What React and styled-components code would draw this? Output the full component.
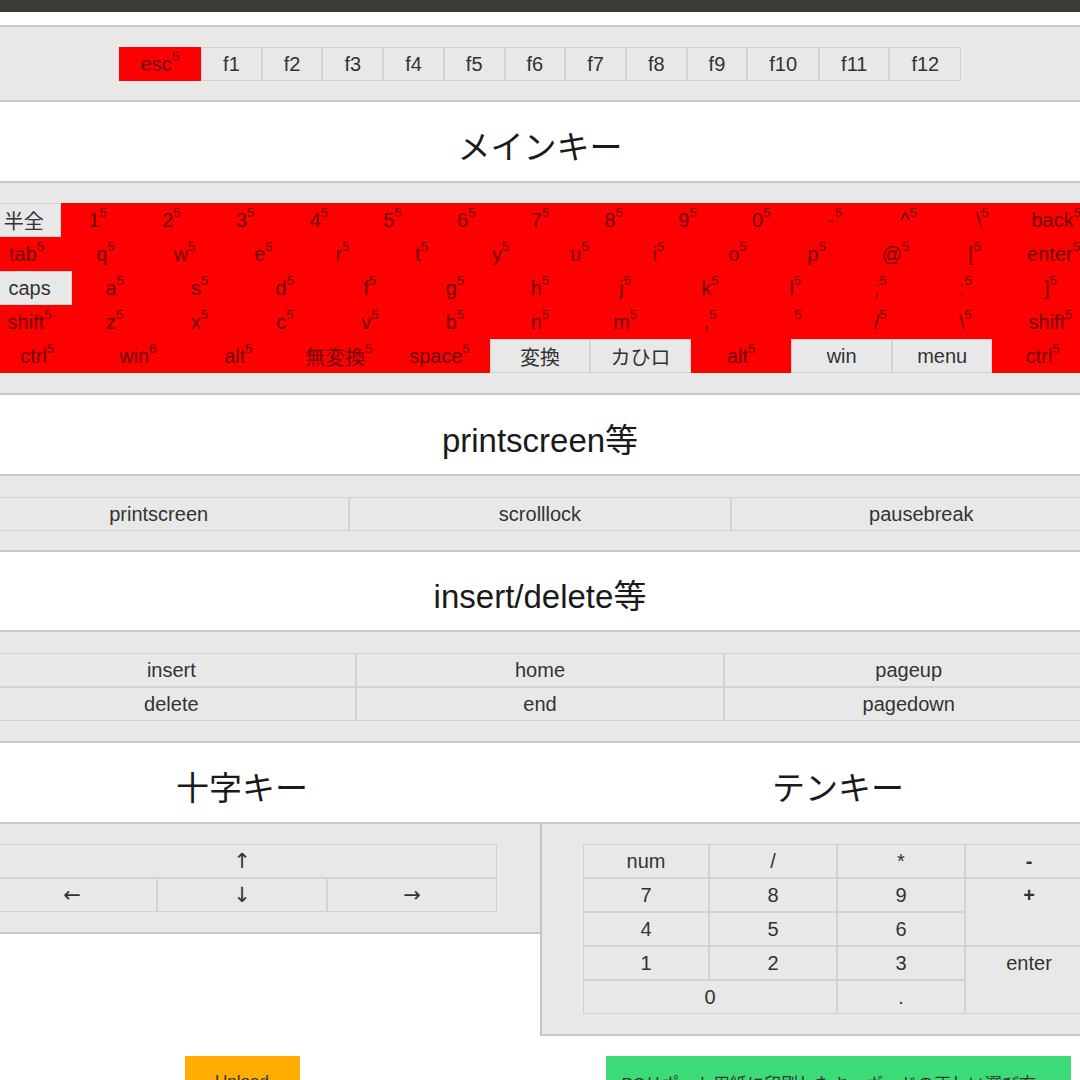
import React from 'react';
import styled, { createGlobalStyle } from 'styled-components';

const GlobalStyle = createGlobalStyle`
  body {
    margin: 0;
    overflow: hidden;
    background: #fff;
    font-family: "Liberation Sans", Arial, "Noto Sans CJK JP", sans-serif;
    color: #222;
  }
`

const TopBar = styled.div`
  height: 12px;
  background: #3a3d37;
  margin-bottom: 13px;
`

const Page = styled.div`
  width: 1106px;
  margin-left: -13px;
`

const Title = styled.h2`
  box-sizing: border-box;
  margin: 0;
  height: ${props => props.h || 79}px;
  padding-top: 6px;
  display: flex;
  align-items: center;
  justify-content: center;
  font-size: 33px;
  font-weight: normal;
  color: #1a1a1a;
  width: ${props => props.w ? `${props.w}px` : 'auto'};
  margin-left: ${props => props.offset || 0}px;
`

const Panel = styled.div`
  background: #e8e8e8;
  border-top: 2px solid #c9c9c9;
  border-bottom: 2px solid #c9c9c9;
  padding: ${props => props.pad || '20px 0'};
`

const FRow = styled.div`
  display: flex;
  justify-content: center;
`

const Row = styled.div`
  display: flex;
  margin: ${props => props.wide ? '0 -19px' : '0'};
`

const Key = styled.div`
  box-sizing: border-box;
  height: 34px;
  display: flex;
  align-items: center;
  justify-content: center;
  font-size: ${props => props.arrow ? 21 : 20}px;
  white-space: nowrap;
  flex: ${props => props.fixed ? '0 0 auto' : '1 1 0'};
  padding: ${props => props.fixed ? '0 21px' : '0'};
  background: ${props => props.red ? '#ff0000' : '#e8e8e8'};
  color: ${props => props.red ? '#6e0000' : '#333'};
  border: 1px solid ${props => props.red ? '#ff0000' : '#d2d2d2'};
  font-family: ${props => props.arrow ? '"DejaVu Sans", sans-serif' : 'inherit'};
`

const Sup = styled.span`
  font-size: 13px;
  line-height: 0;
  position: relative;
  top: -7px;
`

const Split = styled.div`
  display: grid;
  grid-template-columns: 553px 553px;
  align-items: start;
`

const Arrows = styled.div`
  width: 510px;
`

const SidePanel = styled(Panel)`
  border-left: ${props => props.right ? '2px solid #c4c4c4' : 'none'};
  padding: ${props => props.right ? '20px 0 20px 41px' : '20px 43px 20px 0'};
`

const NumGrid = styled.div`
  width: 510px;
  display: grid;
  grid-template-columns: 126px 128px 128px 128px;
  grid-auto-rows: 34px;
`

const NumKey = styled.div`
  box-sizing: border-box;
  border: 1px solid #d2d2d2;
  background: #e8e8e8;
  color: #333;
  font-size: 20px;
  line-height: 32px;
  text-align: center;
  grid-row: ${props => props.rows ? `span ${props.rows}` : 'auto'};
  grid-column: ${props => props.cols ? `span ${props.cols}` : 'auto'};
  font-weight: ${props => props.bold ? 'bold' : 'normal'};
`

const ButtonCell = styled.div`
  width: 510px;
  margin-left: ${props => props.offset || 0}px;
  display: flex;
  justify-content: center;
  padding-top: 20px;
`

const Button = styled.button`
  border: none;
  height: 52px;
  width: ${props => props.w}px;
  background: ${props => props.bg};
  color: #333;
  font-family: inherit;
  font-size: 17px;
  white-space: nowrap;
  overflow: hidden;
  text-align: ${props => props.left ? 'left' : 'center'};
  padding: 0 16px;
  cursor: pointer;
`

const fKeys = ['f1', 'f2', 'f3', 'f4', 'f5', 'f6', 'f7', 'f8', 'f9', 'f10', 'f11', 'f12'];

const g = (l) => ({ l, gray: true });

const mainRows = [
  [g('半全'), '1', '2', '3', '4', '5', '6', '7', '8', '9', '0', '-', '^', '\\', 'back'],
  ['tab', 'q', 'w', 'e', 'r', 't', 'y', 'u', 'i', 'o', 'p', '@', '[', 'enter'],
  [g('caps'), 'a', 's', 'd', 'f', 'g', 'h', 'j', 'k', 'l', ';', ':', ']'],
  ['shift', 'z', 'x', 'c', 'v', 'b', 'n', 'm', ',', '.', '/', '\\', 'shift'],
  ['ctrl', { l: 'win', n: 6 }, 'alt', '無変換', 'space', g('変換'), g('カひロ'), 'alt', g('win'), g('menu'), 'ctrl'],
];

const MainKey = ({ k }) => {
  const item = typeof k === 'string' ? { l: k } : k;
  if (item.gray) return <Key>{item.l}</Key>;
  return <Key red>{item.l}<Sup>{item.n || 5}</Sup></Key>;
}

const App = () => {
  return (
    <>
      <GlobalStyle />
      <TopBar />
      <Page>
        <Panel pad="20px 0 19px">
          <FRow>
            <Key red fixed>esc<Sup>5</Sup></Key>
            {fKeys.map(f => <Key fixed key={f}>{f}</Key>)}
          </FRow>
        </Panel>

        <Title>メインキー</Title>
        <Panel>
          {mainRows.map((row, i) => (
            <Row key={i}>
              {row.map((k, j) => <MainKey k={k} key={j} />)}
            </Row>
          ))}
        </Panel>

        <Title>printscreen等</Title>
        <Panel pad="21px 0 19px">
          <Row wide>
            <Key>printscreen</Key>
            <Key>scrolllock</Key>
            <Key>pausebreak</Key>
          </Row>
        </Panel>

        <Title h={78}>insert/delete等</Title>
        <Panel pad="21px 0 20px">
          <Row>
            <Key>insert</Key>
            <Key>home</Key>
            <Key>pageup</Key>
          </Row>
          <Row>
            <Key>delete</Key>
            <Key>end</Key>
            <Key>pagedown</Key>
          </Row>
        </Panel>

        <Split>
          <div>
            <Title w={510}>十字キー</Title>
            <SidePanel>
              <Arrows>
                <Row><Key arrow>↑</Key></Row>
                <Row>
                  <Key arrow>←</Key>
                  <Key arrow>↓</Key>
                  <Key arrow>→</Key>
                </Row>
              </Arrows>
            </SidePanel>
          </div>
          <div>
            <Title w={510} offset={43}>テンキー</Title>
            <SidePanel right>
              <NumGrid>
                <NumKey>num</NumKey>
                <NumKey>/</NumKey>
                <NumKey>*</NumKey>
                <NumKey bold>-</NumKey>
                <NumKey>7</NumKey>
                <NumKey>8</NumKey>
                <NumKey>9</NumKey>
                <NumKey rows={2} bold>+</NumKey>
                <NumKey>4</NumKey>
                <NumKey>5</NumKey>
                <NumKey>6</NumKey>
                <NumKey>1</NumKey>
                <NumKey>2</NumKey>
                <NumKey>3</NumKey>
                <NumKey rows={2}>enter</NumKey>
                <NumKey cols={2}>0</NumKey>
                <NumKey>.</NumKey>
              </NumGrid>
            </SidePanel>
          </div>
        </Split>

        <Split>
          <ButtonCell>
            <Button w={115} bg="#ffae00">Upload</Button>
          </ButtonCell>
          <ButtonCell offset={43}>
            <Button w={465} bg="#3ddb78" left>PCリポート用紙に印刷したキーボードの正しい選び方</Button>
          </ButtonCell>
        </Split>
      </Page>
    </>
  );
}

export default App;
